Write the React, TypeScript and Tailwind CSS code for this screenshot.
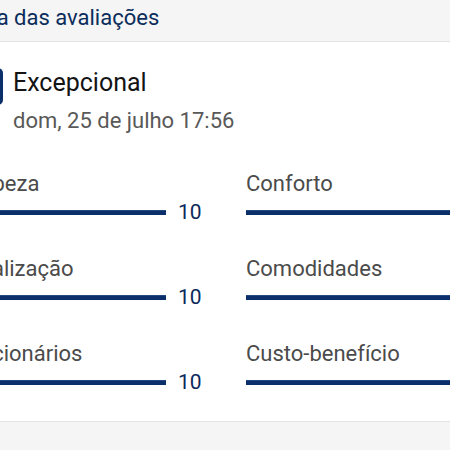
const left = [
  { label: "Limpeza", score: "10" },
  { label: "Localização", score: "10" },
  { label: "Funcionários", score: "10" },
];

const right = [
  { label: "Conforto", score: "10" },
  { label: "Comodidades", score: "10" },
  { label: "Custo-benefício", score: "10" },
];

function ScoreRow({ label, score }: { label: string; score: string }) {
  return (
    <div className="h-[85px]">
      <p className="text-[22px] leading-[26px] text-[#4b4b4b] whitespace-nowrap">
        {label}
      </p>
      <div className="mt-[2px] flex items-center gap-3">
        <div className="h-[5px] flex-1 bg-[#0a2f6b] border-t border-[#24497f]" />
        <span className="w-[23px] text-[21px] leading-[26px] text-[#0b2a5a]">
          {score}
        </span>
      </div>
    </div>
  );
}

export default function App() {
  return (
    <div className="w-[450px] h-[450px] overflow-hidden bg-[#f5f5f5] font-['Roboto',sans-serif]">
      <div className="-ml-[49px] w-[600px]">
        <div className="h-[41px] pt-[6px]">
          <h2 className="-ml-[3px] text-[22px] leading-[24px] text-[#0b2d5b] whitespace-nowrap">
            Média das avaliações
          </h2>
        </div>

        <div className="bg-white border-t border-b border-[#e4e4e4] pl-4 pt-[26px] h-[381px]">
          <div className="flex items-start gap-[10px]">
            <div className="w-[36px] h-[37px] rounded-[5px] bg-[#0a2f6b] text-white text-[15px] font-bold flex items-center justify-center">
              10
            </div>
            <div>
              <h3 className="text-[25px] leading-[30px] text-[#141414]">Excepcional</h3>
              <p className="mt-[10px] text-[22px] leading-[26px] text-[#595959] whitespace-nowrap">
                dom, 25 de julho 17:56
              </p>
            </div>
          </div>

          <div className="mt-[37px] flex gap-[45px] -ml-[11px]">
            <div className="w-[245px]">
              {left.map((r) => (
                <ScoreRow key={r.label} {...r} />
              ))}
            </div>
            <div className="w-[245px]">
              {right.map((r) => (
                <ScoreRow key={r.label} {...r} />
              ))}
            </div>
          </div>
        </div>
      </div>
    </div>
  );
}
